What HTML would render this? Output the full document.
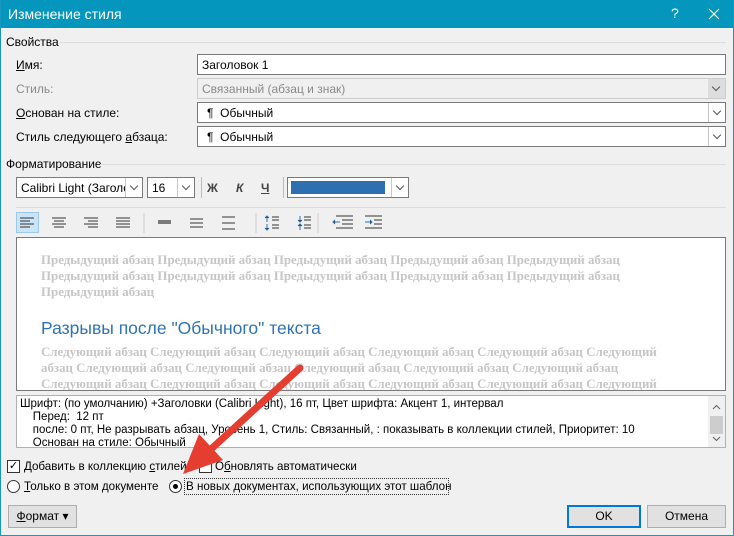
<!DOCTYPE html>
<html><head><meta charset="utf-8"><style>
*{box-sizing:border-box;margin:0;padding:0}
body{width:734px;height:536px;background:#f0f0f0;font-family:"Liberation Sans","DejaVu Sans",sans-serif;font-size:12px;color:#000;position:relative;overflow:hidden}
.a{position:absolute;white-space:nowrap}
#frame{position:absolute;left:0;top:0;width:734px;height:536px;border:1px solid #1a97be;border-top:none}
#title{position:absolute;left:0;top:0;width:734px;height:28px;background:#0596bd;color:#fff;font-size:14px}
.grp{position:absolute;height:1px;background:#dcdcdc}
.box{position:absolute;background:#fff;border:1px solid #7a7a7a;height:21px;padding:3px 4px;font-size:12px}
.dd{position:absolute;right:0;top:0;width:17px;height:19px;border-left:1px solid #c8c8c8}
.dd::after{content:"";position:absolute;left:5px;top:5px;width:5px;height:5px;border-right:1px solid #555;border-bottom:1px solid #555;transform:rotate(45deg)}
.prev{font-family:"Liberation Serif",serif;font-weight:bold;color:#c6c6c6;font-size:12.9px;line-height:16px}
.btn{position:absolute;border:1px solid #adadad;background:#e1e1e1;height:23px;text-align:center;line-height:21px}
u{text-decoration:underline}
.sm{font-size:11.6px}
</style></head><body>
<div id="title"><span class="a" style="left:8px;top:6px">Изменение стиля</span><span class="a" style="left:671px;top:5px">?</span>
<svg class="a" style="left:708px;top:8px" width="12" height="12"><path d="M1 1L11 11M11 1L1 11" stroke="#fff" stroke-width="1.2"/></svg></div>
<div id="frame"></div>

<span class="a" style="left:6px;top:35px">Свойства</span><div class="grp" style="left:60px;top:42px;width:666px"></div>
<span class="a" style="left:16px;top:58px"><u>И</u>мя:</span>
<div class="box" style="left:197px;top:54px;width:529px">Заголовок 1</div>
<span class="a" style="left:16px;top:82px;color:#8a8a8a">Стиль:</span>
<div class="box" style="left:197px;top:78px;width:529px;background:#f0f0f0;border-color:#ccc;color:#8a8a8a">Связанный (абзац и знак)<div class="dd" style="background:#ddd;border:none"></div></div>
<span class="a" style="left:16px;top:106px"><u>О</u>снован на стиле:</span>
<div class="box" style="left:197px;top:102px;width:529px;padding-left:9px">¶&nbsp; Обычный<div class="dd"></div></div>
<span class="a" style="left:16px;top:130px">Стиль следующего <u>а</u>бзаца:</span>
<div class="box" style="left:197px;top:126px;width:529px;padding-left:9px">¶&nbsp; Обычный<div class="dd"></div></div>

<span class="a" style="left:6px;top:157px">Форматирование</span><div class="grp" style="left:100px;top:164px;width:626px"></div>
<div class="box" style="left:16px;top:177px;width:127px;overflow:hidden">Calibri Light (Заголо<div class="dd" style="background:#fff"></div></div>
<div class="box" style="left:147px;top:177px;width:48px">16<div class="dd"></div></div>
<div class="a" style="left:201px;top:177px;width:1px;height:21px;background:#bbb"></div>
<span class="a" style="left:207px;top:181px;font-weight:bold;color:#444">Ж</span>
<span class="a" style="left:236px;top:181px;font-weight:bold;font-style:italic;color:#444">К</span>
<span class="a" style="left:261px;top:181px;font-weight:bold;color:#444;text-decoration:underline">Ч</span>
<div class="a" style="left:283px;top:177px;width:1px;height:21px;background:#bbb"></div>
<div class="box" style="left:287px;top:177px;width:122px;padding:0"><div class="a" style="left:3px;top:3px;width:94px;height:13px;background:#2e6fb0"></div><div class="dd"></div></div>
<div class="grp" style="left:16px;top:207px;width:710px"></div>

<div class="a" style="left:16px;top:212px;width:23px;height:21px;background:#cce4f7;border:1px solid #99c9ef"></div>
<svg class="a" style="left:0;top:210px" width="400" height="26" stroke="#333" stroke-width="1">
<path d="M20 8h14M20 11h10M20 14h14M20 17h10"/>
<path d="M52 8h14M54 11h10M52 14h14M54 17h10"/>
<path d="M84 8h14M88 11h10M84 14h14M88 17h10"/>
<path d="M116 8h14M116 11h14M116 14h14M116 17h14"/>
<path d="M144 3v20M256 3v20M318 3v20" stroke="#ccc"/>
<path d="M158 11h13M158 13h13" stroke-width="1.2"/>
<path d="M190 9h13M190 13h13M190 17h13"/>
<path d="M222 7h13M222 13h13M222 19h13"/>
<path d="M267 6v6M265 8l2-2 2 2M267 14v6M265 18l2 2 2-2" stroke="#2e6fb0"/><path d="M272 7h7M272 10h7M272 15h7M272 18h7"/>
<path d="M300 6v6M298 10l2 2 2-2M300 14v6M298 16l2-2 2 2" stroke="#2e6fb0"/><path d="M304 7h7M304 10h7M304 15h7M304 18h7"/>
<path d="M333 12h7M335 10l-2 2 2 2" stroke="#2e6fb0"/><path d="M336 6h17M342 10h11M342 14h11M336 18h17"/>
<path d="M365 12h7M370 10l2 2-2 2" stroke="#2e6fb0"/><path d="M365 6h17M374 10h8M374 14h8M365 18h17"/>
</svg>

<div class="a" style="left:16px;top:237px;width:710px;height:154px;background:#fff;border:1px solid #7a7a7a;overflow:hidden">
<div class="prev a" style="left:24px;top:14px">Предыдущий абзац Предыдущий абзац Предыдущий абзац Предыдущий абзац Предыдущий абзац<br>Предыдущий абзац Предыдущий абзац Предыдущий абзац Предыдущий абзац Предыдущий абзац<br>Предыдущий абзац</div>
<div class="a" style="left:24px;top:80px;color:#2e74b5;font-size:17.5px">Разрывы после "Обычного" текста</div>
<div class="prev a" style="left:24px;top:106px">Следующий абзац Следующий абзац Следующий абзац Следующий абзац Следующий абзац Следующий<br>абзац Следующий абзац Следующий абзац Следующий абзац Следующий абзац Следующий абзац<br>Следующий абзац Следующий абзац Следующий абзац Следующий абзац Следующий абзац Следующий</div>
</div>

<div class="a" style="left:16px;top:395px;width:710px;height:53px;background:#fff;border:1px solid #b0b0b0;overflow:hidden;font-size:11.5px;line-height:13px">
<div class="a" style="left:3px;top:2px">Шрифт: (по умолчанию) +Заголовки (Calibri Light), 16 пт, Цвет шрифта: Акцент 1, интервал<br>&nbsp;&nbsp;&nbsp;&nbsp;Перед:&nbsp; 12 пт<br>&nbsp;&nbsp;&nbsp;&nbsp;после: 0 пт, Не разрывать абзац, Уровень 1, Стиль: Связанный, : показывать в коллекции стилей, Приоритет: 10<br>&nbsp;&nbsp;&nbsp;&nbsp;Основан на стиле: Обычный</div>
<div class="a" style="right:0;top:0;width:17px;height:51px;background:#f0f0f0"><div class="a" style="left:2px;top:20px;width:13px;height:18px;background:#cdcdcd"></div>
<svg class="a" style="left:4px;top:8px" width="9" height="40" stroke="#606060" fill="none"><path d="M1 5l3.5-3.5L8 5M1 33l3.5 3.5L8 33"/></svg></div>
</div>

<div class="a" style="left:7px;top:460px;width:13px;height:13px;border:1px solid #333;background:#fff;font-size:11px;line-height:11px;text-align:center">✓</div>
<span class="a sm" style="left:24px;top:460px">Добавить в коллекцию <u>с</u>тилей</span>
<div class="a" style="left:199px;top:460px;width:13px;height:13px;border:1px solid #333;background:#fff"></div>
<span class="a sm" style="left:215px;top:460px">О<u>б</u>новлять автоматически</span>
<div class="a" style="left:7px;top:480px;width:13px;height:13px;border:1px solid #333;border-radius:50%;background:#fff"></div>
<span class="a sm" style="left:24px;top:480px"><u>Т</u>олько в этом документе</span>
<div class="a" style="left:169px;top:480px;width:13px;height:13px;border:1px solid #333;border-radius:50%;background:#fff"><div class="a" style="left:3px;top:3px;width:5px;height:5px;border-radius:50%;background:#000"></div></div>
<div class="a" style="left:184px;top:478px;width:265px;height:17px;border:1px dotted #333"></div>
<span class="a sm" style="left:186px;top:480px">В новых документах, использующих этот шаблон</span>

<svg class="a" style="left:0;top:0" width="734" height="536"><path d="M300 368 L210 450" stroke="#e53d2f" stroke-width="7" stroke-linecap="round"/><path d="M183 474 L199 434 L223 460 Z" fill="#e53d2f"/></svg>

<div class="btn" style="left:8px;top:505px;width:69px"><u>Ф</u>ормат ▾</div>
<div class="btn" style="left:567px;top:505px;width:74px;border:2px solid #0078d7;line-height:19px">OK</div>
<div class="btn" style="left:647px;top:505px;width:79px">Отмена</div>
</body></html>
